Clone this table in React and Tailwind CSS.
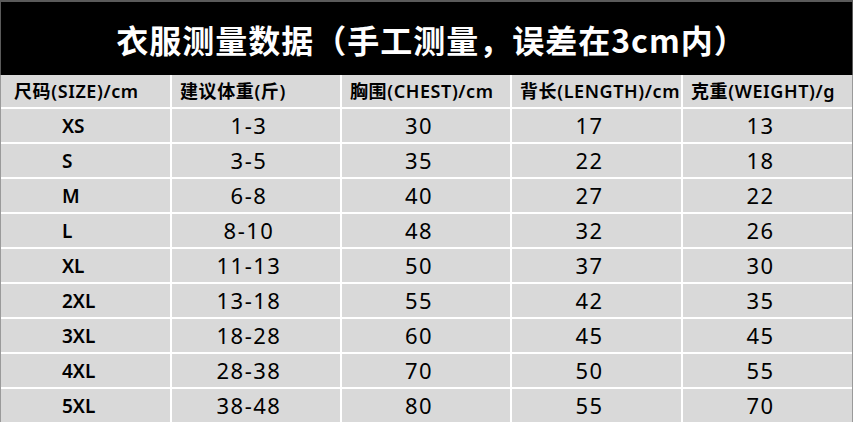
const HEADERS = ["尺码(SIZE)/cm", "建议体重(斤)", "胸围(CHEST)/cm", "背长(LENGTH)/cm", "克重(WEIGHT)/g"]

const ROWS = [
  ["XS", "1-3", "30", "17", "13"],
  ["S", "3-5", "35", "22", "18"],
  ["M", "6-8", "40", "27", "22"],
  ["L", "8-10", "48", "32", "26"],
  ["XL", "11-13", "50", "37", "30"],
  ["2XL", "13-18", "55", "42", "35"],
  ["3XL", "18-28", "60", "45", "45"],
  ["4XL", "28-38", "70", "50", "55"],
  ["5XL", "38-48", "80", "55", "70"],
]

const font = { fontFamily: '"Noto Sans", "Noto Sans CJK SC", sans-serif' }

export default function App() {
  return (
    <div className="w-[853px] h-[424px] overflow-hidden bg-white" style={font}>
      {/* Title bar */}
      <div className="h-[75px] bg-black border-t-2 border-x border-[#5a5a5a] flex items-center justify-center">
        <h1
          className="text-white text-[32px] font-bold tracking-[1px] leading-none pl-[10px]"
          style={{ fontFamily: '"Noto Sans CJK SC", sans-serif' }}
        >
          衣服测量数据（手工测量，误差在3cm内）
        </h1>
      </div>

      {/* Table */}
      <div className="grid grid-cols-[169px_168px_168px_169px_1fr] grid-rows-[32px_repeat(9,33px)] gap-[2px] border-x border-[#9a9a9a] bg-white">
        {HEADERS.map((h, i) => (
          <div
            key={h}
            className={`bg-[#d9d9d9] flex items-center text-[18px] font-semibold text-black tracking-[0.6px] whitespace-nowrap ${i === 0 ? "pl-[13px]" : "pl-[8px]"} ${i === 4 ? "pl-[2px]" : ""}`}
          >
            {h}
          </div>
        ))}
        {ROWS.map((row) =>
          row.map((cell, i) => (
            <div
              key={row[0] + i}
              className={`bg-[#d9d9d9] flex items-center text-black ${
                i === 0
                  ? "pl-[61px] pt-[2px] text-[19px] font-semibold"
                  : "justify-center pr-[14px] text-[22px] tracking-[1.5px]"
              }`}
            >
              {cell}
            </div>
          ))
        )}
      </div>
    </div>
  )
}
